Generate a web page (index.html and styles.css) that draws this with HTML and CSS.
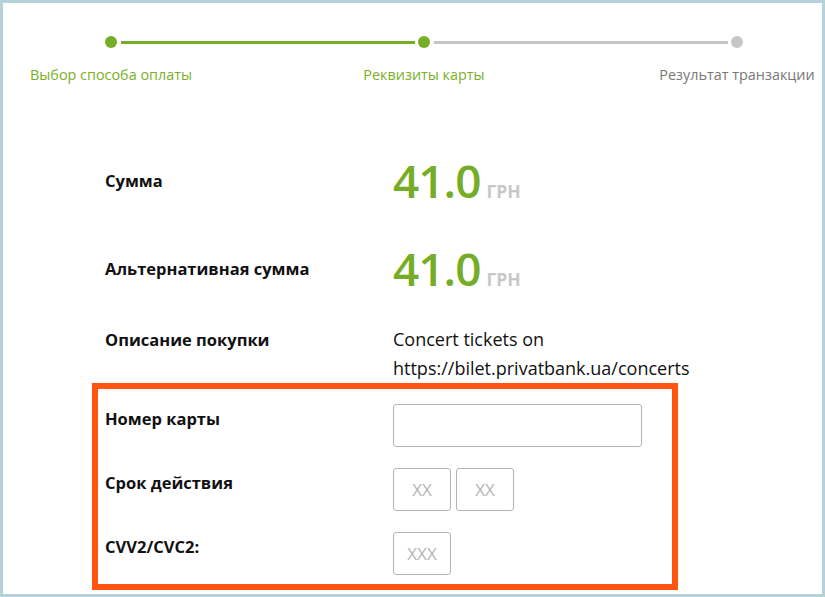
FILE: index.html
```html
<!DOCTYPE html>
<html lang="uk">
<head>
    <meta charset="UTF-8">
    <meta name="viewport" content="width=device-width, initial-scale=1.0">
    <title>Оплата картой</title>
    <link rel="stylesheet" href="styles.css">
</head>
<body>
    <div class="frame">
        <!-- шаги оплаты -->
        <div class="steps">
            <div class="step done">
                <span class="dot"></span>
                <span class="step-label">Выбор способа оплаты</span>
            </div>
            <span class="line done"></span>
            <div class="step done">
                <span class="dot"></span>
                <span class="step-label">Реквизиты карты</span>
            </div>
            <span class="line"></span>
            <div class="step">
                <span class="dot"></span>
                <span class="step-label">Результат транзакции</span>
            </div>
        </div>

        <div class="details">
            <div class="row amount-row">
                <div class="label">Сумма</div>
                <div class="amount"><span class="sum">41.0</span><span class="currency">ГРН</span></div>
            </div>
            <div class="row amount-row second">
                <div class="label">Альтернативная сумма</div>
                <div class="amount"><span class="sum">41.0</span><span class="currency">ГРН</span></div>
            </div>
            <div class="row desc-row">
                <div class="label">Описание покупки</div>
                <div class="desc">Concert tickets on https://bilet.privatbank.ua/concerts</div>
            </div>
        </div>

        <!-- данные карты -->
        <div class="card-box">
            <div class="row field-row">
                <div class="label">Номер карты</div>
                <input type="text" class="input card-number">
            </div>
            <div class="row field-row">
                <div class="label">Срок действия</div>
                <div class="inputs">
                    <input type="text" class="input small" placeholder="XX">
                    <input type="text" class="input small" placeholder="XX">
                </div>
            </div>
            <div class="row field-row">
                <div class="label">CVV2/CVC2:</div>
                <input type="text" class="input small" placeholder="XXX">
            </div>
        </div>
    </div>
</body>
</html>
```

FILE: styles.css
```css
body {
    margin: 0;
    font-family: "Open Sans", "Noto Sans", sans-serif;
    color: #111;
}

.frame {
    height: 597px;
    box-sizing: border-box;
    border: 3px solid #b5d2d8;
    background: #fff;
    overflow: hidden;
}

/* шаги */
.steps {
    display: flex;
    align-items: flex-start;
    width: 638px;
    margin: 33px 0 0 102px;
}

.step {
    width: 12px;
    display: flex;
    flex-direction: column;
    align-items: center;
}

.dot {
    width: 12px;
    height: 12px;
    border-radius: 50%;
    background-color: #c6c6c6;
}

.step.done .dot {
    background-color: #76ad27;
}

.step-label {
    margin-top: 17px;
    white-space: nowrap;
    font-size: 14.4px;
    line-height: 19px;
    color: #777;
}

.step.done .step-label {
    color: #7aaf28;
}

.line {
    flex: 1;
    height: 3px;
    margin: 5px 3px 0 4px;
    background-color: #c6c6c6;
}

.line.done {
    background-color: #76ad27;
}

/* сумма и описание */
.details {
    margin: 67px 0 0 102px;
    width: 640px;
}

.row {
    display: grid;
    grid-template-columns: 288px 1fr;
}

.label {
    font-weight: 700;
    font-size: 16.5px;
    line-height: 29px;
}

.amount-row {
    align-items: center;
    height: 58px;
}

.amount-row.second {
    margin-top: 30px;
}

.amount {
    display: flex;
    align-items: baseline;
    gap: 6px;
}

.sum {
    font-size: 46px;
    line-height: 58px;
    font-weight: 600;
    color: #76ad27;
    letter-spacing: -1px;
}

.currency {
    font-size: 17.5px;
    font-weight: 700;
    color: #c8c8c8;
}

.desc-row {
    margin-top: 28px;
}

.desc {
    font-size: 18px;
    line-height: 29px;
    width: 320px;
}

/* рамка с полями карты */
.card-box {
    width: 567px;
    margin-left: 89px;
    padding: 15px 0 9px 7px;
    border: 6px solid #ff5510;
}

.field-row {
    align-items: start;
}

.field-row + .field-row {
    margin-top: 21px;
}

.inputs {
    display: flex;
    gap: 5px;
}

.input {
    box-sizing: border-box;
    height: 43px;
    margin: 0;
    padding: 0;
    border: 1px solid #b4b4b4;
    border-radius: 3px;
    font-family: "Open Sans", sans-serif;
    font-size: 17px;
    text-align: center;
    color: #333;
}

.input::placeholder {
    color: #b5b5b5;
}

.card-number {
    width: 249px;
}

.small {
    width: 58px;
}
```
